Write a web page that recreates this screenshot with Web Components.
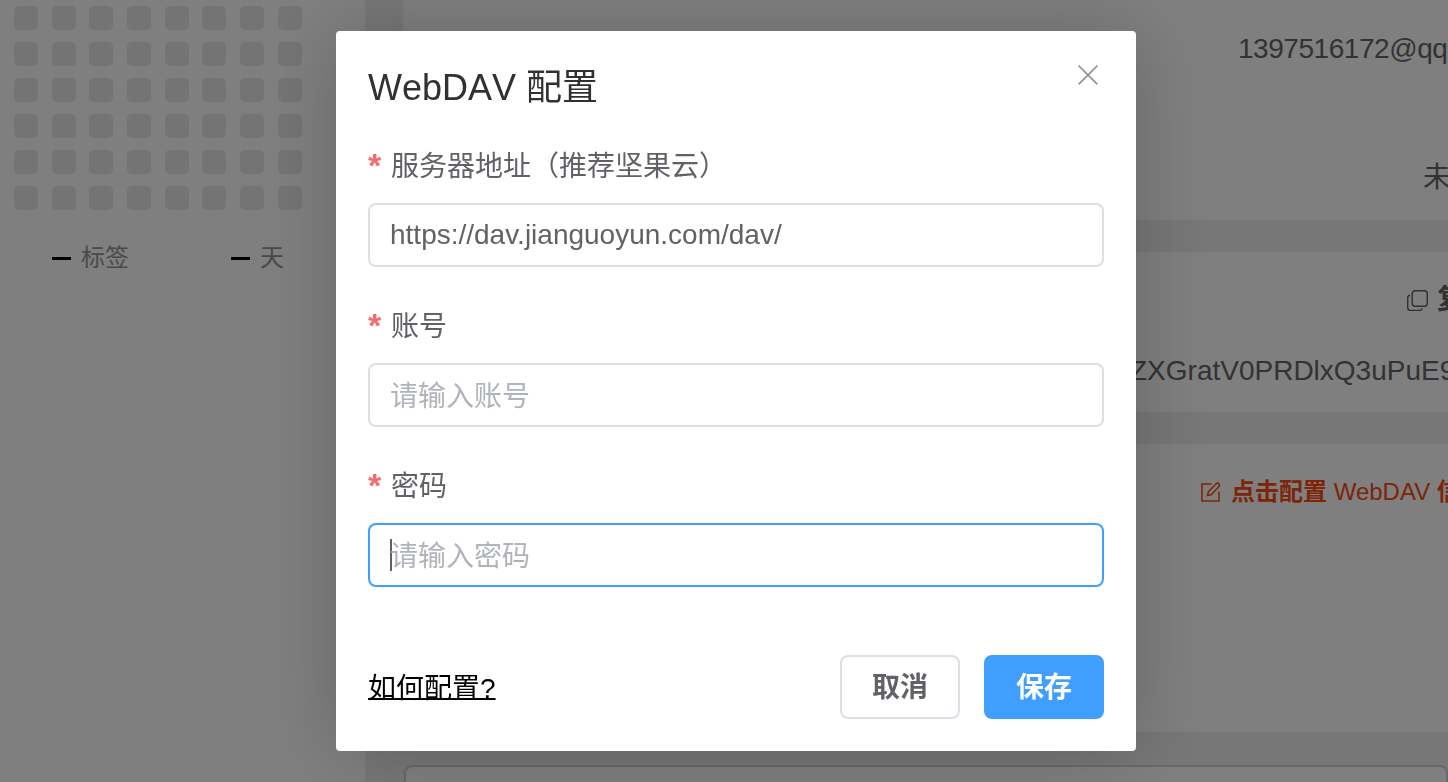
<!DOCTYPE html>
<html lang="zh">
<head>
<meta charset="utf-8">
<title>WebDAV 配置</title>
<style>
  html, body { margin: 0; height: 100%; overflow: hidden; }
  body { font-family: "Liberation Sans", "Noto Sans CJK SC", sans-serif; color: #303133; background: #eee; }
</style>
</head>
<body>
<settings-page>
  <heat-map slot="side"></heat-map>
  <info-card style="height:220px">
    <div style="padding:29px 0 0 835px;letter-spacing:-.45px">1397516172@qq.com</div>
    <div style="padding:89px 0 0 1020px;">未绑定</div>
  </info-card>
  <info-card style="height:160px">
    <div style="padding:28px 0 0 1004px;display:flex;align-items:center;gap:9px;font-weight:700;color:#606266">
      <svg style="flex:none" width="21" height="21" viewBox="0 0 21 21" fill="none" stroke="currentColor" stroke-width="1.4"><rect x="5.2" y="0.7" width="15.1" height="15.6" rx="3"/><path d="M3 5.2A2.6 2.6 0 0 0 .7 7.8v9.7a3 3 0 0 0 3 3h8.8a2.8 2.8 0 0 0 2.7-2.2"/></svg>
      <span style="flex:none">复制</span>
    </div>
    <div style="padding:31px 0 0 727px;">ZXGratV0PRDlxQ3uPuE9</div>
  </info-card>
  <info-card style="height:288px">
    <div style="padding:28px 0 0 798px;display:flex;align-items:center;gap:10px;font-size:24px;color:#fa4a12">
      <svg style="flex:none" width="20" height="20" viewBox="0 0 20 20" fill="none" stroke="currentColor" stroke-width="1.5"><path d="M10.5 2H1v17h17V9.5"/><path d="M6.5 13.5l.8-3.6 7.6-8a2 2 0 0 1 2.9 2.8l-7.7 8z"/></svg>
      <span style="flex:none"><b>点击配置</b> WebDAV <b>信息</b></span>
    </div>
  </info-card>
  <info-card style="height:120px;margin:1px 0 0 1px;border:2px solid #d2d2da;border-radius:8px;border-bottom:0;box-sizing:border-box">
  </info-card>
</settings-page>

<modal-dialog heading="WebDAV 配置">
  <form-field label="服务器地址（推荐坚果云）" value="https://dav.jianguoyun.com/dav/"></form-field>
  <form-field label="账号" placeholder="请输入账号"></form-field>
  <form-field label="密码" placeholder="请输入密码" focused></form-field>
  <a slot="help" href="#">如何配置?</a>
  <dialog-button slot="actions">取消</dialog-button>
  <dialog-button slot="actions" primary>保存</dialog-button>
</modal-dialog>

<script>
customElements.define("settings-page", class extends HTMLElement {
  connectedCallback() {
    const shadowRoot = this.attachShadow({mode: "open"});
    shadowRoot.innerHTML = `
      <style>
        :host { display: flex; width: 1448px; height: 782px; overflow: hidden; background: #eee; }
        .side { width: 365px; flex: none; background: #fff; overflow: hidden; }
        .main { flex: 1; margin-left: 38px; min-width: 0; display: flex; flex-direction: column; gap: 32px; }
      </style>
      <div class="side"><slot name="side"></slot></div>
      <div class="main"><slot></slot></div>
    `;
  }
});

customElements.define("heat-map", class extends HTMLElement {
  connectedCallback() {
    const shadowRoot = this.attachShadow({mode: "open"});
    shadowRoot.innerHTML = `
      <style>
        :host { display: block; padding-top: 6px; }
        .grid { display: grid; grid-template-columns: repeat(9, 24px); grid-auto-rows: 24px; column-gap: 13.7px; row-gap: 12px; margin-left: -23.7px; }
        .grid i { background: #e8e8e8; border-radius: 5px; }
        .legend { display: flex; margin: 30px 0 0 52px; font: 24px/36px "Liberation Sans", "Noto Sans CJK SC", sans-serif; color: #949494; }
        .legend span { display: flex; align-items: center; gap: 10px; width: 179px; flex: none; }
        .legend b { width: 19px; height: 3px; background: #000; }
      </style>
      <div class="grid">${"<i></i>".repeat(54)}</div>
      <div class="legend"><span><b></b>标签</span><span><b></b>天</span></div>
    `;
  }
});

customElements.define("info-card", class extends HTMLElement {
  connectedCallback() {
    const shadowRoot = this.attachShadow({mode: "open"});
    shadowRoot.innerHTML = `
      <style>
        :host { display: block; flex: none; background: #fff; font-size: 28px; line-height: 40px; color: #666; overflow: hidden; white-space: nowrap; }
      </style>
      <slot></slot>
    `;
  }
});

customElements.define("modal-dialog", class extends HTMLElement {
  connectedCallback() {
    const shadowRoot = this.attachShadow({mode: "open"});
    shadowRoot.innerHTML = `
      <style>
        :host { position: fixed; inset: 0; padding-left: 24px; display: flex; align-items: center; justify-content: center; background: rgba(0,0,0,.5); font-family: "Liberation Sans", "Noto Sans CJK SC", sans-serif; }
        .box { position: relative; box-sizing: border-box; width: 800px; height: 720px; padding: 32px; background: #fff; border-radius: 4px; box-shadow: 0 2px 80px rgba(0,0,0,.2); display: flex; flex-direction: column; }
        h2 { margin: 0 0 30px; font-size: 36px; font-weight: 400; line-height: 50px; color: #303133; font-kerning: none; white-space: nowrap; }
        .close { position: absolute; top: 34px; right: 38px; width: 20px; height: 20px; color: #909399; }
        .body { flex: 1; display: flex; flex-direction: column; gap: 36px; }
        .foot { display: flex; align-items: center; justify-content: space-between; }
        .actions { display: flex; gap: 24px; }
        ::slotted(a) { color: #000; font-size: 28px; line-height: 40px; margin-top: 3px; text-decoration: underline; text-decoration-thickness: 2px; text-underline-offset: 0; text-decoration-skip-ink: none; }
      </style>
      <div class="box">
        <svg class="close" viewBox="0 0 20 20" fill="none" stroke="currentColor" stroke-width="1.6"><path d="M.6.6l18.8 18.8M19.4.6L.6 19.4"/></svg>
        <h2>${this.getAttribute("heading")}</h2>
        <div class="body"><slot></slot></div>
        <div class="foot">
          <slot name="help"></slot>
          <div class="actions"><slot name="actions"></slot></div>
        </div>
      </div>
    `;
  }
});

customElements.define("form-field", class extends HTMLElement {
  connectedCallback() {
    const shadowRoot = this.attachShadow({mode: "open"});
    const value = this.getAttribute("value");
    const focused = this.hasAttribute("focused");
    shadowRoot.innerHTML = `
      <style>
        :host { display: block; }
        label { display: flex; height: 44px; margin-bottom: 16px; font-size: 28px; line-height: 48px; color: #606266; white-space: nowrap; }
        label i { font-style: normal; font-weight: 700; font-size: 34px; line-height: 44px; width: 15px; margin-right: 8px; color: #f56c6c; }
        .input { box-sizing: border-box; height: 64px; padding: 0 20px 1px; display: flex; align-items: center; border: 2px solid #dcdfe6; border-radius: 8px; font-size: 28px; color: #606266; white-space: nowrap; }
        .input.focused { border-color: #409eff; }
        .ph { color: #b0b3ba; margin-top: -2px; }
        .caret { width: 2px; height: 32px; background: #606266; margin-right: -2px; }
      </style>
      <label><i>*</i><span>${this.getAttribute("label")}</span></label>
      <div class="input ${focused ? "focused" : ""}">
        ${focused ? '<span class="caret"></span>' : ""}
        ${value ? `<span>${value}</span>` : `<span class="ph">${this.getAttribute("placeholder")}</span>`}
      </div>
    `;
  }
});

customElements.define("dialog-button", class extends HTMLElement {
  connectedCallback() {
    const shadowRoot = this.attachShadow({mode: "open"});
    shadowRoot.innerHTML = `
      <style>
        :host { box-sizing: border-box; display: flex; align-items: center; justify-content: center; width: 120px; height: 64px; padding-bottom: 5px; border: 2px solid #dcdfe6; border-radius: 8px; background: #fff; color: #606266; font-size: 28px; font-weight: 700; }
        :host([primary]) { background: #409eff; border-color: #409eff; color: #fff; }
      </style>
      <slot></slot>
    `;
  }
});
</script>
</body>
</html>
